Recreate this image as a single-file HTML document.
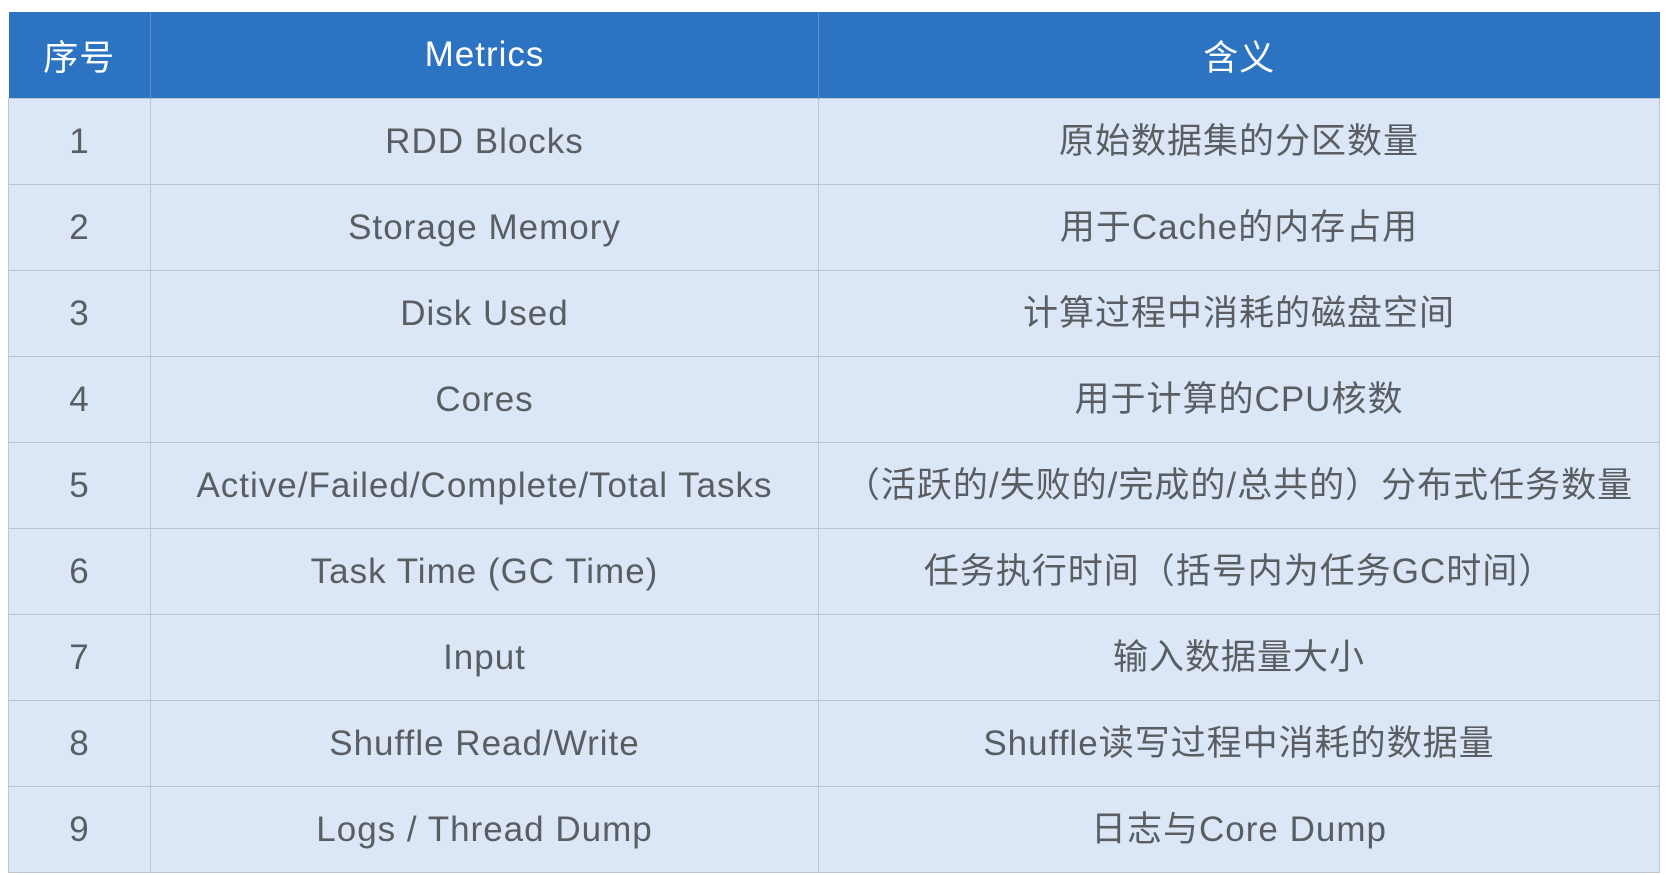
<!DOCTYPE html>
<html><head><meta charset="utf-8"><style>
html,body{margin:0;padding:0;background:#fff;width:1669px;height:875px;overflow:hidden}
table{position:absolute;left:8px;top:12px;width:1652px;border-collapse:collapse;font-family:"Liberation Sans","Noto Sans CJK SC",sans-serif;font-size:35px;letter-spacing:1px;table-layout:fixed}
th{background:#2c74c2;color:#fff;font-weight:normal;height:86px;border-right:1px solid #5a8fcc;padding:0}
td{background:#dbe7f6;color:#5a5e62;height:85px;border:1px solid #b9c6d4;text-align:center;padding:0;white-space:nowrap;line-height:1}
th:last-child{border-right:none}
</style></head><body>
<table>
<colgroup><col style="width:142px"><col style="width:668px"><col></colgroup>
<tr><th>序号</th><th>Metrics</th><th>含义</th></tr>
<tr><td>1</td><td>RDD Blocks</td><td>原始数据集的分区数量</td></tr>
<tr><td>2</td><td>Storage Memory</td><td>用于Cache的内存占用</td></tr>
<tr><td>3</td><td>Disk Used</td><td>计算过程中消耗的磁盘空间</td></tr>
<tr><td>4</td><td>Cores</td><td>用于计算的CPU核数</td></tr>
<tr><td>5</td><td>Active/Failed/Complete/Total Tasks</td><td>（活跃的/失败的/完成的/总共的）分布式任务数量</td></tr>
<tr><td>6</td><td>Task Time (GC Time)</td><td>任务执行时间（括号内为任务GC时间）</td></tr>
<tr><td>7</td><td>Input</td><td>输入数据量大小</td></tr>
<tr><td>8</td><td>Shuffle Read/Write</td><td>Shuffle读写过程中消耗的数据量</td></tr>
<tr><td>9</td><td>Logs / Thread Dump</td><td>日志与Core Dump</td></tr>
</table>
</body></html>
